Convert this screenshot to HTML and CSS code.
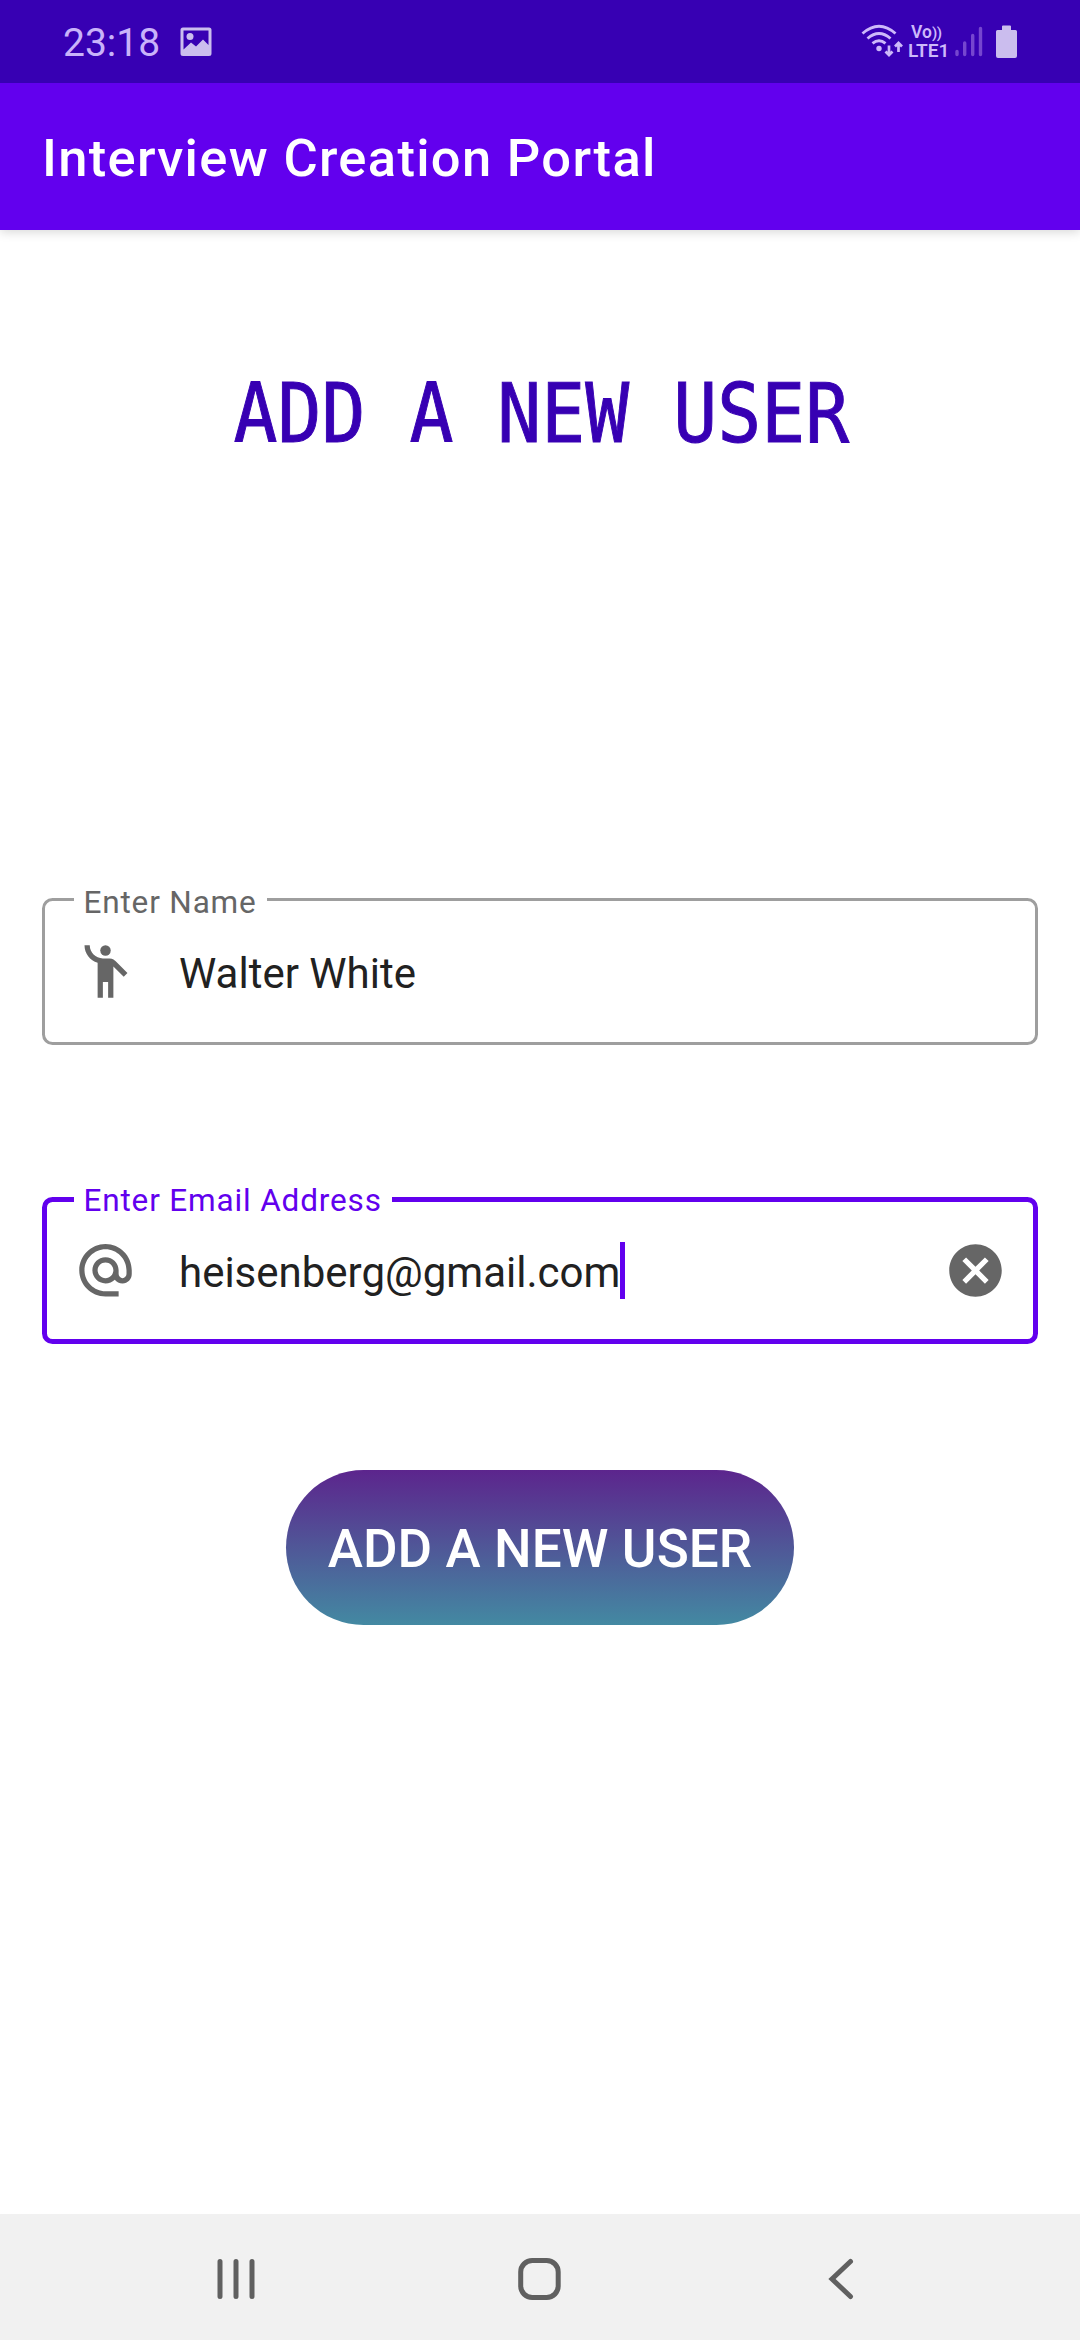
FILE: index.html
```html
<!DOCTYPE html>
<html lang="en">
<head>
<meta charset="utf-8">
<title>Interview Creation Portal</title>
<link rel="stylesheet" href="styles.css">
</head>
<body>
<div class="status-bar">
  <span class="clock">23:18</span>
  <svg class="picture-icon" width="32" height="30" viewBox="0 0 32 30"><path fill-rule="evenodd" d="M3 0.5H29Q31.5 .5 31.5 3V26.500Q31.500 29 29 29H3Q.5 29 .5 26.500V3Q.5 .5 3 .5ZM3.500 3.500V22.500L11 15.500L16 19.500L23 12.500L28.500 18V3.500Z"/><circle cx="10" cy="9.500" r="3.500"/></svg>
  <svg class="wifi-icon" width="42" height="34" viewBox="0 0 42 34">
    <g fill="none" stroke="currentColor" stroke-width="2.900"><path d="M1.500 9.500Q18 -5 34.500 9.500M6.500 14.500Q18 4.500 29.500 14.500M11.500 19.300Q18 14 24.500 19.300"/><path stroke-width="2.700" d="M28 21.500V31M24.500 27.500L28 31L31.500 27.500M37.500 28V19M34 22.500L37.500 19L41 22.500"/></g><circle cx="18" cy="24.500" r="2.700"/>
  </svg>
  <div class="volte"><span class="vo">Vo<span class="waves">))</span></span><span class="lte">LTE1</span></div>
  <svg class="signal-icon" width="28" height="31" viewBox="0 0 28 31"><g fill="none" stroke="#7646cf" stroke-width="3.400" stroke-linecap="round"><path d="M2 25.500V28.500M9.700 17V28.500M17.700 9.500V28.500M25.500 2.500V28.500"/></g></svg>
  <svg class="battery-icon" width="21" height="33" viewBox="0 0 21 33"><path d="M6 5V1.500Q6 .5 7 .5H14Q15 .5 15 1.500V5H19.500Q21 5 21 6.500V31Q21 33 19 33H2Q0 33 0 31V6.500Q0 5 1.500 5Z"/></svg>
</div>
<header class="app-bar">Interview Creation Portal</header>
<main class="content">
  <h1 class="heading">ADD A NEW USER</h1>
  <div class="field">
    <span class="field-label">Enter Name</span>
    <svg class="field-icon" viewBox="0 0 24 24"><circle cx="12" cy="4" r="2"/><path d="M15.890 8.110C15.500 7.720 14.830 7 13.530 7h-2.540C8.240 6.990 6 4.750 6 2H4c0 3.160 2.110 5.840 5 6.710V22h2v-6h2v6h2V10.050L18.950 14l1.410-1.410-4.470-4.480z"/></svg>
    <span class="field-value">Walter White</span>
  </div>
  <div class="field focused">
    <span class="field-label">Enter Email Address</span>
    <svg class="field-icon" viewBox="0 0 24 24"><path d="M12 1.950c-5.520 0-10 4.480-10 10s4.480 10 10 10h5v-2h-5c-4.340 0-8-3.660-8-8s3.660-8 8-8 8 3.660 8 8v1.430c0 .790-.710 1.570-1.500 1.570s-1.500-.780-1.500-1.570v-1.430c0-2.760-2.240-5-5-5s-5 2.240-5 5 2.240 5 5 5c1.380 0 2.640-.560 3.540-1.470.650.890 1.770 1.470 2.960 1.470 1.970 0 3.500-1.600 3.500-3.570v-1.430c0-5.520-4.480-10-10-10zm0 13c-1.660 0-3-1.340-3-3s1.340-3 3-3 3 1.340 3 3-1.340 3-3 3z"/></svg>
    <span class="field-value">heisenberg@gmail.com</span><span class="caret"></span>
    <svg class="field-icon clear" viewBox="0 0 24 24"><path d="M12 2C6.470 2 2 6.470 2 12s4.470 10 10 10 10-4.470 10-10S17.530 2 12 2zm5 13.590L15.590 17 12 13.410 8.410 17 7 15.590 10.590 12 7 8.410 8.410 7 12 10.590 15.590 7 17 8.410 13.410 12 17 15.590z"/></svg>
  </div>
  <button class="submit">ADD A NEW USER</button>
</main>
<nav class="nav-bar">
  <svg width="38" height="42" viewBox="0 0 38 42"><path d="M3 3.500V38.500M19 3.500V38.500M35 3.500V38.500"/></svg>
  <svg class="home" width="43" height="42" viewBox="0 0 43 42"><rect x="2.700" y="2.500" width="37.500" height="37" rx="11.500"/></svg>
  <svg width="26" height="42" viewBox="0 0 26 42"><path d="M22.500 3.500L4 21L22.500 38.500"/></svg>
</nav>
</body>
</html>
```
FILE: styles.css
```css
* { box-sizing: border-box; }
body {
  margin: 0;
  width: 1080px;
  height: 2340px;
  display: flex;
  flex-direction: column;
  background: #fff;
  font-family: Roboto, sans-serif;
  overflow: hidden;
}
svg { display: block; flex: none; fill: currentColor; }
.status-bar {
  position: relative;
  z-index: 1;
  height: 83px;
  flex: none;
  display: flex;
  align-items: flex-start;
  padding-left: 63px;
  background: #3700b3;
  color: #cbbdee;
}
.clock { width: 117px; font-size: 39px; line-height: 48px; margin-top: 19px; color: #c9b3fa; }
.picture-icon { margin-top: 27px; }
.wifi-icon { margin: 24px 0 0 649px; color: #cdb9fa; }
.volte {
  width: 45px;
  height: 40px;
  margin: 23px 0 0 5px;
  display: flex;
  flex-direction: column;
  font-weight: 600;
  color: #cdb9fa;
  white-space: nowrap;
}
.vo { font-size: 17.5px; line-height: 18px; padding-left: 3px; }
.waves { font-size: 15px; letter-spacing: -0.5px; }
.lte { font-size: 19px; line-height: 18px; }
.signal-icon { margin: 26px 0 0 2px; }
.battery-icon { margin: 25px 0 0 13px; }
.app-bar {
  height: 147px;
  flex: none;
  padding-left: 42px;
  background: #6200ee;
  color: #fff;
  font-size: 52.5px;
  font-weight: 500;
  line-height: 151px;
  letter-spacing: 1.31px;
  box-shadow: 0 2px 10px rgba(0, 0, 0, 0.16);
}
.content {
  flex: 1;
  display: flex;
  flex-direction: column;
  align-items: center;
  padding: 134px 42px 0;
}
.heading {
  margin: 0 0 434px;
  padding-left: 4px;
  height: 100px;
  font: 400 82px/100px "DejaVu Sans Mono", monospace;
  color: #3700b3;
  -webkit-text-stroke: 1px #3700b3;
  transform: scaleX(0.891);
  white-space: nowrap;
}
.field {
  position: relative;
  width: 996px;
  height: 147px;
  margin-bottom: 152px;
  display: flex;
  align-items: center;
  padding: 0 28px 0 29px;
  border: 3px solid #9e9e9e;
  border-radius: 10.5px;
  color: #666;
}
.field.focused {
  margin-bottom: 126px;
  padding: 0 26px 0 27px;
  border: 5px solid #6200ee;
}
.field-label {
  position: absolute;
  left: 29px;
  top: -18px;
  padding: 0 10.5px 0 9.5px;
  background: #fff;
  font-size: 31.5px;
  line-height: 40px;
  letter-spacing: 0.84px;
}
.focused .field-label { left: 27px; top: -21px; color: #6200ee; }
.field-icon { width: 63px; height: 63px; }
.field-value {
  margin: 4px 0 0 42px;
  font-size: 42px;
  line-height: 56px;
  color: #212121;
}
.caret { width: 5px; height: 57px; background: #6200ee; }
.clear { margin-left: auto; }
.submit {
  width: 508px;
  height: 155px;
  padding: 3px 0 0;
  border: 0;
  border-radius: 78px;
  background: linear-gradient(#5c258d, #4389a2);
  color: #fff;
  font: 500 53px/60px Roboto, sans-serif;
  letter-spacing: 0.1px;
  white-space: nowrap;
}
.nav-bar {
  height: 126px;
  flex: none;
  display: flex;
  align-items: center;
  justify-content: space-between;
  padding: 4px 226px 0 217px;
  background: #f1f1f1;
  color: #606060;
}
.nav-bar svg { fill: none; stroke: currentColor; stroke-width: 5; stroke-linecap: round; }
.nav-bar .home { margin-right: 5px; }
```
